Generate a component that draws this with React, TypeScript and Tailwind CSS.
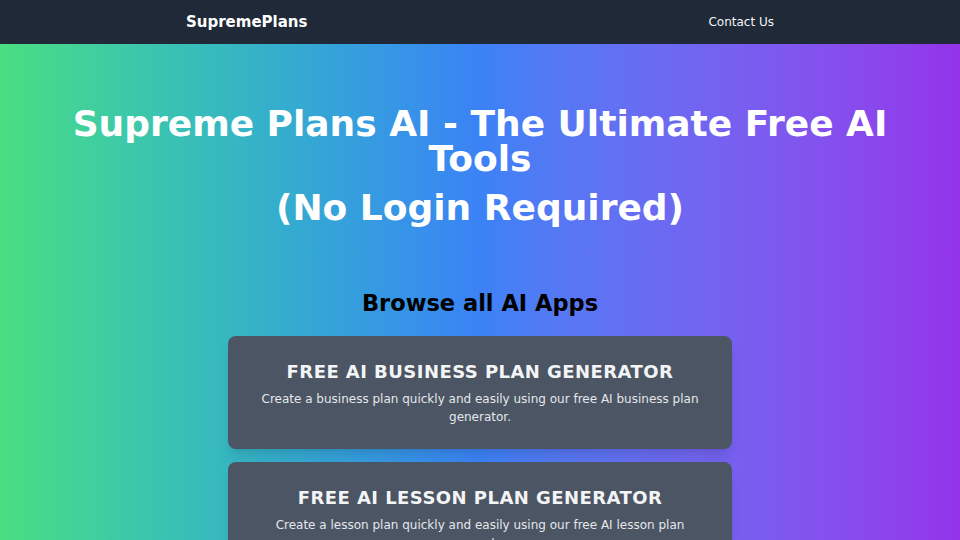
const apps = [
  {
    title: "Free AI Business Plan Generator",
    desc: "Create a business plan quickly and easily using our free AI business plan generator.",
  },
  {
    title: "Free AI Lesson Plan Generator",
    desc: "Create a lesson plan quickly and easily using our free AI lesson plan generator.",
  },
  {
    title: "Free AI Marketing Plan Generator",
    desc: "Create a marketing plan quickly and easily using our free AI marketing plan generator.",
  },
];

export default function App() {
  return (
    <div
      className="min-h-screen bg-gradient-to-r from-[#4ade80] via-[#3b82f6] to-[#9333ea]"
      style={{ fontFamily: '"DejaVu Sans", sans-serif' }}
    >
      <nav className="bg-[#1f2937] h-11 flex items-center justify-between px-[186px]">
        <a href="#" className="text-white font-bold text-[15px]">
          SupremePlans
        </a>
        <a href="#" className="text-gray-100 text-xs">
          Contact Us
        </a>
      </nav>

      <header className="max-w-4xl mx-auto px-4 pt-[62px] text-center text-white">
        <h1 className="text-4xl font-bold leading-[35px]">
          Supreme Plans AI - The Ultimate Free AI Tools
        </h1>
        <h2 className="text-4xl font-bold mt-[12px]">(No Login Required)</h2>
      </header>

      <section className="mt-[59px] flex flex-col items-center">
        <h3 className="text-[22.5px] font-bold text-black">Browse all AI Apps</h3>
        <div className="w-[504px] mt-[15px] flex flex-col gap-[13px]">
          {apps.map((app) => (
            <div
              key={app.title}
              className="bg-[#4b5563] rounded-lg shadow-lg px-6 pt-[22px] pb-[23px] text-center"
            >
              <h4 className="text-lg leading-7 font-bold uppercase tracking-wide text-gray-100">
                {app.title}
              </h4>
              <p className="text-xs leading-[18px] text-gray-200 mt-1">{app.desc}</p>
            </div>
          ))}
        </div>
      </section>
    </div>
  );
}
